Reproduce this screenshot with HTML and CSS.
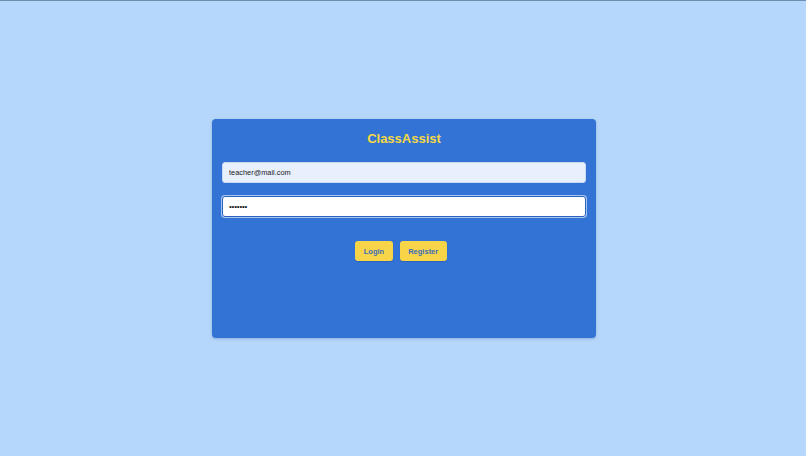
FILE: index.html
```html
<!DOCTYPE html>
<html lang="en">
<head>
<meta charset="utf-8">
<title>ClassAssist</title>
<link rel="stylesheet" href="styles.css">
</head>
<body>
<div class="page">
  <form class="card">
    <h1 class="title">ClassAssist</h1>
    <input class="field field-email" type="email" value="teacher@mail.com">
    <input class="field field-pass" type="password" value="1234567">
    <div class="actions">
      <button type="button" class="btn">Login</button>
      <button type="button" class="btn">Register</button>
    </div>
  </form>
</div>
</body>
</html>
```
FILE: styles.css
```css
html, body {
  margin: 0;
  padding: 0;
}
body {
  background: #b5d7fb;
  font-family: "Liberation Sans", Arial, sans-serif;
}
.page {
  box-sizing: border-box;
  min-height: 456px;
  border-top: 1px solid #6d8dab;
  display: flex;
  align-items: center;
  justify-content: center;
}
.card {
  box-sizing: border-box;
  width: 384px;
  height: 219px;
  margin-left: 2px;
  background: #3273d5;
  border-radius: 4px;
  box-shadow: 0 1px 3px rgba(30, 60, 120, 0.25);
  padding: 12px 10px;
  display: flex;
  flex-direction: column;
}
.title {
  margin: 0 0 16px;
  font-size: 13px;
  line-height: 15px;
  font-weight: bold;
  text-align: center;
  color: #f5d845;
}
.field {
  box-sizing: border-box;
  display: block;
  width: 100%;
  height: 21px;
  margin: 0;
  padding: 0 6px;
  border-radius: 3px;
  font-family: "Liberation Sans", Arial, sans-serif;
  font-size: 7.4px;
  color: #1a1a1a;
  outline: none;
}
.field-email {
  background: #e8f0fe;
  border: 1px solid #c9d9f2;
}
.field-pass {
  margin-top: 13px;
  background: #fff;
  border: 1px solid #2b62bd;
  box-shadow: 0 0 0 1px #a8c6f3;
  font-size: 8px;
  letter-spacing: -0.2px;
}
.actions {
  margin-top: 24px;
  display: flex;
  justify-content: center;
  gap: 7px;
  padding-right: 6px;
}
.btn {
  box-sizing: border-box;
  height: 20px;
  padding: 0 8.5px;
  border: none;
  border-radius: 3px;
  background: #f8d548;
  color: #3b6cb8;
  font-family: "Liberation Sans", Arial, sans-serif;
  font-size: 7.5px;
  font-weight: bold;
  box-shadow: 0 1px 1px rgba(20, 50, 110, 0.25);
  cursor: pointer;
}
```
